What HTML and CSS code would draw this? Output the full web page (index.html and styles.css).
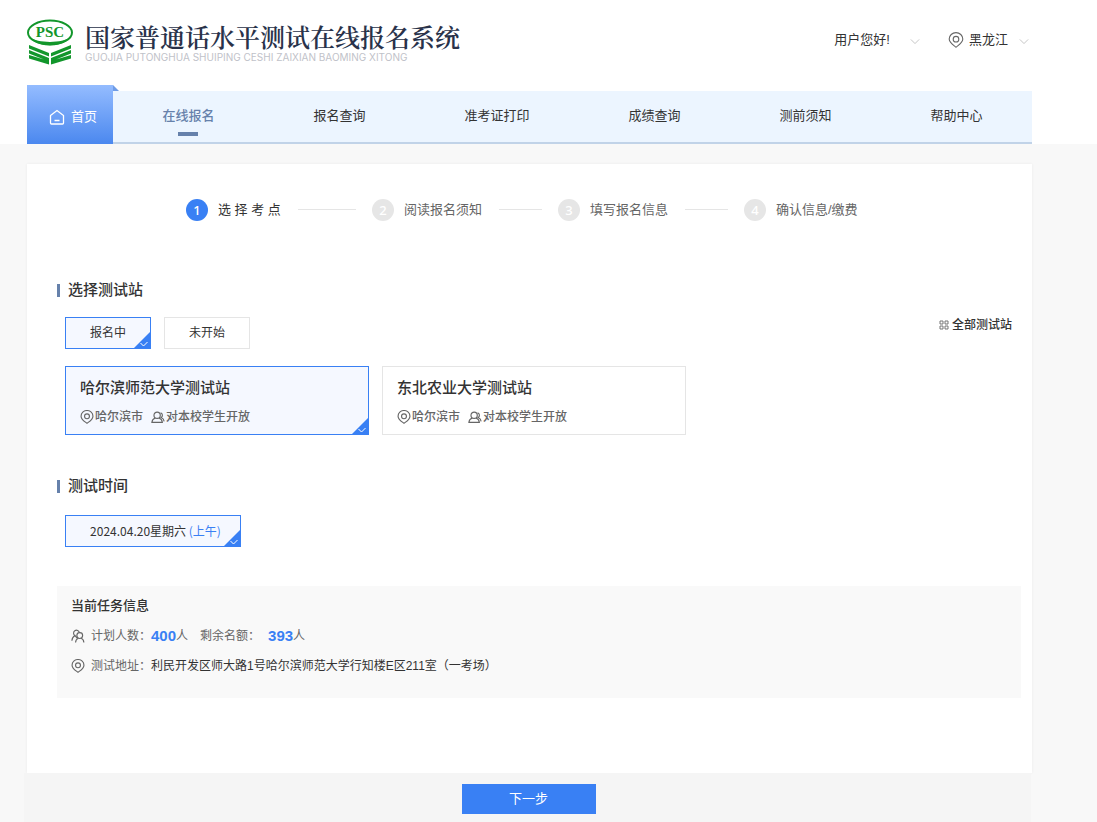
FILE: index.html
```html
<!DOCTYPE html>
<html lang="zh-CN">
<head>
<meta charset="UTF-8">
<meta name="viewport" content="width=device-width, initial-scale=1.0">
<title>国家普通话水平测试在线报名系统</title>
<link rel="stylesheet" href="styles.css">
</head>
<body>
<!-- shared icons -->
<svg class="sprite" aria-hidden="true">
    <symbol id="pin" viewBox="0 0 16 16">
        <path d="M8 15.2C5.200 13 1.200 10.800 1.200 7a6.800 6.400 0 0 1 13.600 0c0 3.800-4 6-6.800 8.200z"/>
        <circle cx="8" cy="7.200" r="2.800"/>
    </symbol>
    <symbol id="users" viewBox="0 0 16 16">
        <circle cx="7" cy="6" r="3.600"/>
        <path d="M5 9.200C2.800 9.900 1.200 11.500 1 14.200h12c-.2-2.700-1.800-4.300-4-5M11 3.200a3 3 0 0 1 .6 5.400c1.900.8 3.200 2.200 3.400 4.400"/>
    </symbol>
    <symbol id="people" viewBox="0 0 16 16">
        <circle cx="10" cy="7.500" r="3.300"/>
        <path d="M5.200 15.500c.2-2.600 1.300-4.200 3.200-4.900M11.600 10.600c1.800.7 2.900 2.300 3.100 4.900M9.500 4.200A3.300 3.300 0 1 0 4.600 7.500M1 13.400c.2-2.700 1.300-4.600 3.600-5.900l2.400 3"/>
    </symbol>
    <symbol id="down" viewBox="0 0 12 8">
        <path d="M1 1.500l5 5 5-5"/>
    </symbol>
    <symbol id="corner" viewBox="0 0 18 18">
        <path class="corner-bg" d="M18 0v18H0z"/>
        <path class="corner-tick" d="M7.500 12l3 3 4-4"/>
    </symbol>
</svg>

<header>
    <div class="top">
        <div class="logo">
            <svg class="logo-mark" viewBox="0 0 48 46" aria-hidden="true">
                <ellipse cx="23" cy="13.500" rx="22" ry="12"/>
                <path class="logo-shade" d="M3 18c5 11 35 11 40 0-7 6.500-33 6.500-40 0z"/>
                <text x="23" y="18">PSC</text>
                <path class="logo-book" d="M2 26l20 8v3.400L2 29.400zM2 31l20 8v3.400L2 34.400zM2 36l20 6v3.400L2 39.400zM44 26l-20 8v3.400l20-8zM44 31l-20 8v3.400l20-8zM44 36l-20 6v3.400l20-6z"/>
            </svg>
            <div class="logo-text">
                <div class="logo-name">国家普通话水平测试在线报名系统</div>
                <div class="logo-pinyin">GUOJIA PUTONGHUA SHUIPING CESHI ZAIXIAN BAOMING XITONG</div>
            </div>
        </div>
        <div class="account">
            <button type="button" class="user">用户您好!<svg class="arrow"><use href="#down"/></svg></button>
            <button type="button" class="region"><svg class="icon pin-big"><use href="#pin"/></svg>黑龙江<svg class="arrow"><use href="#down"/></svg></button>
        </div>
    </div>
    <nav>
        <a class="home" href="#">
            <svg class="home-icon" viewBox="0 0 16 16" aria-hidden="true"><path d="M1.500 6.500L8 1.500l6.500 5v7.500a1 1 0 0 1-1 1h-11a1 1 0 0 1-1-1zM5.500 11.500h5"/></svg>首页
        </a>
        <ul class="menu">
            <li><a class="active" href="#">在线报名</a></li>
            <li><a href="#">报名查询</a></li>
            <li><a href="#">准考证打印</a></li>
            <li><a href="#">成绩查询</a></li>
            <li><a href="#">测前须知</a></li>
            <li><a href="#">帮助中心</a></li>
        </ul>
    </nav>
</header>

<main>
    <div class="card">
        <ol class="steps">
            <li class="current"><span class="num">1</span>选 择 考 点</li>
            <li><span class="num">2</span>阅读报名须知</li>
            <li><span class="num">3</span>填写报名信息</li>
            <li><span class="num">4</span>确认信息/缴费</li>
        </ol>

        <section>
            <h2>选择测试站</h2>
            <div class="filter">
                <button type="button" class="option selected">报名中<svg class="corner"><use href="#corner"/></svg></button>
                <button type="button" class="option">未开始</button>
                <a class="all" href="#">
                    <svg class="grid-icon" viewBox="0 0 10 10" aria-hidden="true"><path d="M1 1h3v3H1zM6 1h3v3H6zM1 6h3v3H1zM6 6h3v3H6z"/></svg>全部测试站
                </a>
            </div>
            <div class="stations">
                <button type="button" class="station selected">
                    <span class="name">哈尔滨师范大学测试站</span>
                    <span class="meta"><svg class="icon"><use href="#pin"/></svg>哈尔滨市<svg class="icon users"><use href="#users"/></svg>对本校学生开放</span>
                    <svg class="corner"><use href="#corner"/></svg>
                </button>
                <button type="button" class="station">
                    <span class="name">东北农业大学测试站</span>
                    <span class="meta"><svg class="icon"><use href="#pin"/></svg>哈尔滨市<svg class="icon users"><use href="#users"/></svg>对本校学生开放</span>
                </button>
            </div>
        </section>

        <section>
            <h2>测试时间</h2>
            <div class="times">
                <button type="button" class="option time selected">2024.04.20星期六 <span class="half">(上午)</span><svg class="corner"><use href="#corner"/></svg></button>
            </div>
        </section>

        <div class="info">
            <h3>当前任务信息</h3>
            <p><svg class="icon"><use href="#people"/></svg><span class="label">计划人数：</span><b>400</b>人<span class="label left">剩余名额：</span><b>393</b>人</p>
            <p><svg class="icon"><use href="#pin"/></svg><span class="label">测试地址：</span><span class="address">利民开发区师大路1号哈尔滨师范大学行知楼E区211室（一考场）</span></p>
        </div>
    </div>
    <div class="bottom">
        <button type="button" class="next">下一步</button>
    </div>
</main>
</body>
</html>
```
FILE: styles.css
```css
* {
    box-sizing: border-box;
}
body {
    margin: 0;
    background-color: #f8f8f8;
    color: #333;
    font-family: "Liberation Sans", "Noto Sans CJK SC", sans-serif;
    font-size: 13px;
    line-height: 20px;
}
a {
    color: inherit;
    text-decoration: none;
}
button {
    padding: 0;
    border: none;
    background: none;
    color: inherit;
    font: inherit;
    cursor: pointer;
}
ul, ol, h2, h3, p {
    margin: 0;
    padding: 0;
    list-style: none;
}
svg {
    flex: none;
    fill: none;
}
.sprite {
    position: absolute;
    width: 0;
    height: 0;
}
.icon {
    width: 14px;
    height: 14px;
    stroke: #666;
    stroke-width: 1.3;
}

/* header */
header {
    padding: 0 65px 0 27px;
    background-color: #fff;
}
.top {
    display: flex;
    justify-content: space-between;
    height: 85px;
    padding-top: 19px;
}
.logo {
    display: flex;
    gap: 10px;
}
.logo-mark {
    width: 48px;
    height: 46px;
}
.logo-mark ellipse {
    stroke: #12962b;
    stroke-width: 2;
}
.logo-mark text {
    fill: #12962b;
    font-family: "Liberation Serif", serif;
    font-size: 15px;
    font-weight: bold;
    text-anchor: middle;
}
.logo-shade, .logo-book {
    fill: #12962b;
}
.logo-name {
    padding-top: 2px;
    color: #29324a;
    font-family: "Noto Serif CJK SC", "Noto Sans CJK SC", serif;
    font-size: 25px;
    font-weight: 600;
    line-height: 30px;
}
.logo-pinyin {
    color: #bfc2c9;
    font-family: Inter, sans-serif;
    font-size: 10px;
    line-height: 12px;
}
.account {
    display: flex;
    gap: 25px;
    height: 42px;
}
.user, .region {
    display: flex;
    align-items: center;
}
.pin-big {
    width: 16px;
    height: 16px;
    margin-right: 5px;
    stroke-width: 1.1;
}
.arrow {
    width: 10px;
    height: 7px;
    margin: 2px 3px 0 11px;
    stroke: #bbb;
}
.user .arrow {
    margin-left: 20px;
}
nav {
    display: flex;
    align-items: flex-end;
}
.home {
    position: relative;
    display: flex;
    align-items: center;
    justify-content: center;
    gap: 6px;
    width: 86px;
    height: 59px;
    padding: 4px 0 0 6px;
    background: linear-gradient(#94bcff, #4b88ef);
    color: #fff;
}
/* folded corner */
.home::after {
    content: "";
    position: absolute;
    top: 0;
    left: 100%;
    border-style: solid;
    border-width: 6px 0 0 6px;
    border-color: transparent transparent transparent #6f9ce6;
}
.home-icon {
    width: 16px;
    height: 16px;
    stroke: #fff;
    stroke-width: 1.3;
}
.menu {
    flex: 1;
    display: flex;
    height: 53px;
    border-bottom: 2px solid #c1d3e8;
    background-color: #ecf5ff;
}
.menu li {
    flex: 1 1 auto;
    display: flex;
    justify-content: center;
}
.menu a {
    position: relative;
    padding-top: 15px;
}
.menu .active {
    color: #6681ab;
    font-weight: 500;
}
.menu .active::after {
    content: "";
    position: absolute;
    left: 50%;
    bottom: 6px;
    width: 20px;
    height: 4px;
    margin-left: -10px;
    background-color: #6681ab;
}

/* content */
main {
    padding: 20px 65px 0 27px;
}
.card {
    padding: 35px 11px 75px 30px;
    background-color: #fff;
    box-shadow: 0 0 3px rgba(0, 0, 0, 0.06);
}
.steps {
    display: flex;
    margin-bottom: 59px;
    padding-left: 129px;
}
.steps li {
    flex: none;
    display: flex;
    align-items: center;
    width: 186px;
    height: 22px;
    color: #666;
    white-space: nowrap;
}
.steps li:last-child {
    width: auto;
}
.steps li:not(:last-child)::after {
    content: "";
    flex: 1;
    height: 1px;
    margin: 0 16px 2px 17px;
    background-color: #e5e5e5;
}
.steps .current {
    color: #333;
}
.num {
    width: 22px;
    height: 22px;
    margin-right: 10px;
    border-radius: 50%;
    background-color: #e6e6e6;
    color: #fff;
    font-family: "Noto Sans", sans-serif;
    font-weight: 500;
    line-height: 22px;
    text-align: center;
}
.current .num {
    background-color: #3980f4;
}
h2 {
    display: flex;
    align-items: center;
    gap: 8px;
    margin-bottom: 17px;
    font-size: 15px;
    font-weight: 500;
}
h2::before {
    content: "";
    width: 3px;
    height: 13px;
    background-color: #6681ab;
}
section + section {
    margin-top: 41px;
}
.filter {
    display: flex;
    gap: 13px;
    padding-left: 8px;
}
.option {
    position: relative;
    width: 86px;
    height: 32px;
    border: 1px solid #e5e5e5;
    background-color: #fff;
    font-size: 12px;
}
.selected {
    border-color: #3980f4;
    background-color: #f5f8ff;
}
.corner {
    position: absolute;
    right: -1px;
    bottom: -1px;
    width: 18px;
    height: 18px;
}
.corner-bg {
    fill: #3980f4;
}
.corner-tick {
    stroke: #fff;
}
.all {
    display: flex;
    align-items: center;
    gap: 3px;
    height: 16px;
    margin-left: auto;
    padding-right: 9px;
    font-size: 12px;
    font-weight: 500;
}
.grid-icon {
    width: 10px;
    height: 10px;
    stroke: #777;
}
.stations {
    display: flex;
    gap: 13px;
    margin-top: 17px;
    padding-left: 8px;
}
.station {
    position: relative;
    width: 304px;
    height: 69px;
    padding: 3px 14px 0;
    border: 1px solid #e5e5e5;
    background-color: #fff;
    text-align: left;
}
.station.selected {
    border-color: #3980f4;
    background-color: #f5f8ff;
}
.name {
    display: block;
    margin-bottom: 9px;
    font-size: 15px;
    font-weight: 500;
}
.meta {
    display: flex;
    align-items: center;
    gap: 1px;
    color: #666;
    font-size: 12px;
    font-weight: 500;
}
.users {
    margin-left: 7px;
}
.times {
    padding: 2px 0 0 8px;
}
.time {
    width: 176px;
    padding-left: 5px;
    font-family: "Noto Sans CJK SC", sans-serif;
}
.half {
    color: #3980f4;
}
.info {
    margin-top: 39px;
    padding: 10px 14px 22px;
    background-color: #f9f9f9;
    font-size: 12px;
}
h3 {
    font-size: 13px;
    font-weight: 500;
}
.info p {
    display: flex;
    align-items: center;
    margin-top: 10px;
    color: #666;
}
.info .icon {
    margin-right: 6px;
}
.info b {
    color: #3980f4;
    font-size: 15px;
}
.left {
    margin-left: 12px;
    margin-right: 8px;
}
.address {
    color: #333;
}
.bottom {
    position: relative;
    margin: 0 1px 0 -3px;
    padding: 11px 0 8px 2px;
    background-color: #f5f5f5;
}
.next {
    display: block;
    width: 134px;
    height: 30px;
    margin: 0 auto;
    background-color: #3980f4;
    color: #fff;
}
```
